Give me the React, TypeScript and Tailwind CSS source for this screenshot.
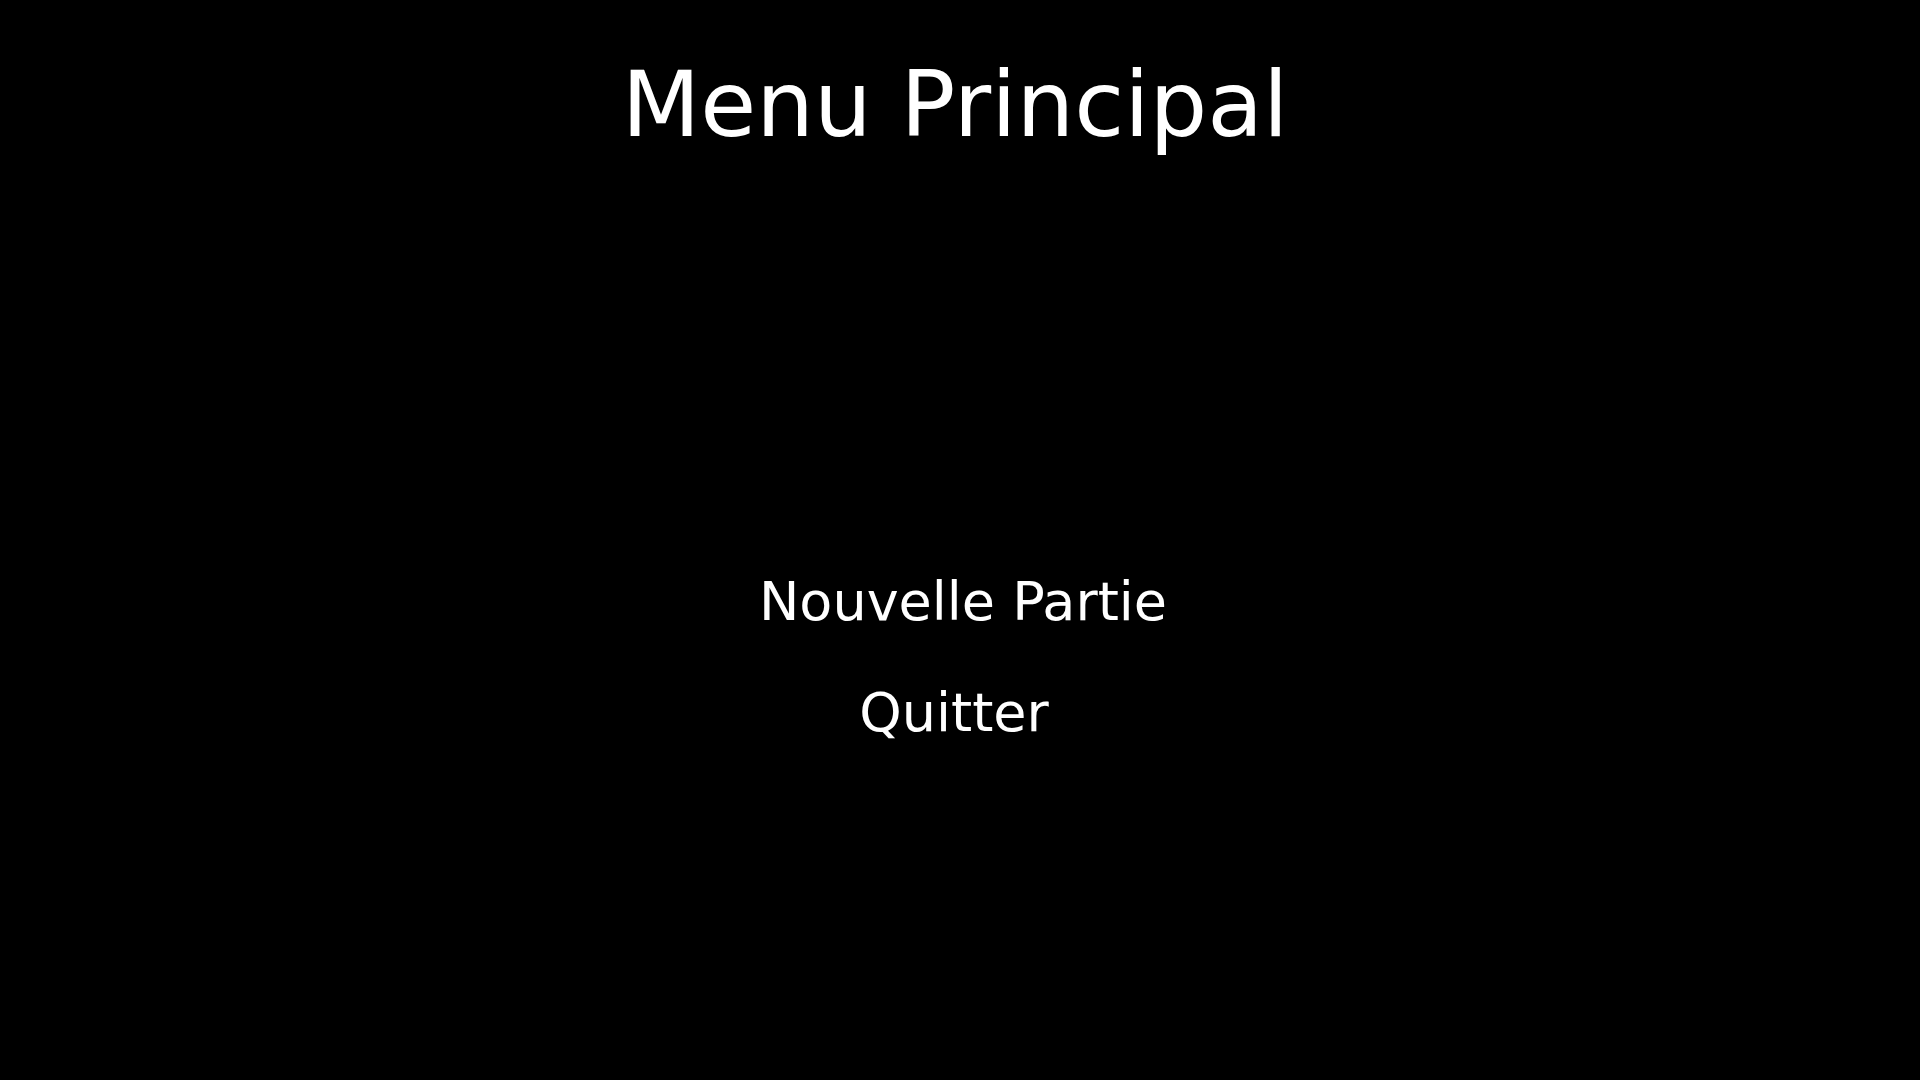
export default function App() {
  return (
    <div
      className="w-full h-[1080px] bg-black text-white flex flex-col items-center"
      style={{ fontFamily: '"DejaVu Sans", sans-serif' }}
    >
      <h1 className="pt-[52px] mr-[10px] text-[91px] leading-[106px] font-normal">Menu Principal</h1>
      <div className="mt-[412px] flex flex-col items-center gap-[48px] text-[54px] leading-[63px]">
        <button className="ml-[6px] cursor-pointer">Nouvelle Partie</button>
        <button className="mr-[12px] cursor-pointer">Quitter</button>
      </div>
    </div>
  );
}
